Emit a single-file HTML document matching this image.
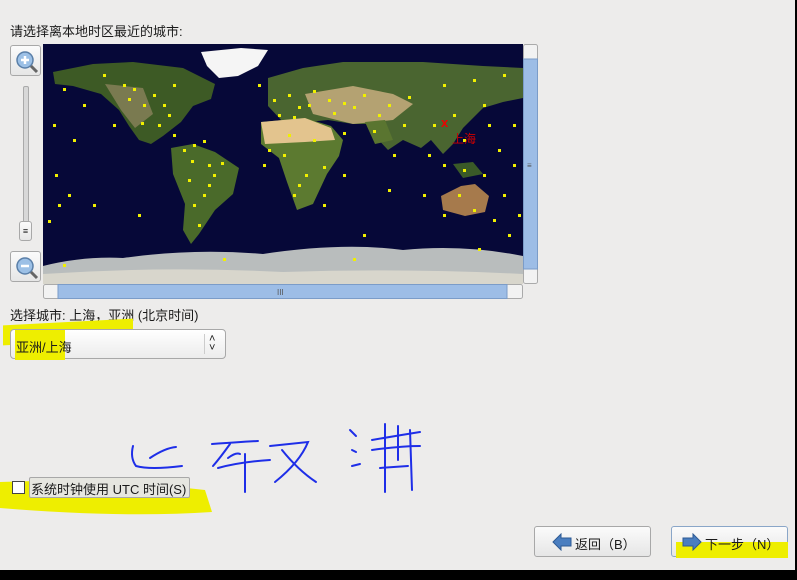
<!DOCTYPE html>
<html><head><meta charset="utf-8"><style>
body{margin:0;width:797px;height:580px;background:#edeceb;font-family:"Liberation Sans","Noto Sans CJK SC",sans-serif;font-size:13px;color:#1a1a1a;position:relative;overflow:hidden}
.a{position:absolute}
.btn{position:absolute;border:1px solid #a8a8a8;border-radius:3px;background:linear-gradient(#fbfbfb,#e6e6e6);box-sizing:border-box}
</style></head><body>
<div class="a" style="left:10px;top:21px">请选择离本地时区最近的城市:</div>
<div class="btn" style="left:10px;top:45px;width:31px;height:31px">
<svg width="31" height="31"><circle cx="14" cy="14" r="8" fill="#9cc0e6" stroke="#5a7fa8" stroke-width="1.5"/><path d="M10 14h8M14 10v8" stroke="#fff" stroke-width="2.5"/><path d="M20 20l6 6" stroke="#666" stroke-width="3"/></svg></div>
<div class="btn" style="left:10px;top:251px;width:31px;height:31px">
<svg width="31" height="31"><circle cx="14" cy="14" r="8" fill="#9cc0e6" stroke="#5a7fa8" stroke-width="1.5"/><path d="M10 14h8" stroke="#fff" stroke-width="2.5"/><path d="M20 20l6 6" stroke="#666" stroke-width="3"/></svg></div>
<div class="a" style="left:23px;top:86px;width:4px;height:150px;background:#d8d8d8;border:1px solid #aaa;border-radius:2px"></div>
<div class="btn" style="left:19px;top:221px;width:13px;height:20px;font-size:9px;text-align:center;line-height:18px">≡</div>
<svg class="a" style="left:43px;top:44px" width="496" height="256">
<rect x="0" y="0" width="480" height="240" fill="#060838"/>
<polygon points="10,28 50,20 90,18 140,24 172,40 168,55 150,62 138,78 120,92 108,100 96,96 86,82 76,66 58,50 30,42 12,40" fill="#3d5a25"/>
<polygon points="62,40 100,44 110,70 92,84 78,66" fill="#7a7a50"/>
<polygon points="158,8 198,4 225,6 215,22 195,32 176,34 164,22" fill="#f5f5f5"/>
<polygon points="128,104 150,100 172,108 196,124 190,150 172,166 156,190 148,200 140,186 142,160 130,130" fill="#4a6a2a"/>
<polygon points="225,34 260,24 300,18 380,18 440,22 480,24 480,54 460,58 440,64 420,84 410,100 400,110 388,96 378,104 360,96 345,106 332,92 330,80 310,80 285,76 265,78 240,78 225,62" fill="#4a6530"/>
<polygon points="262,50 310,42 350,50 370,60 350,76 310,80 270,70" fill="#b4a272"/>
<polygon points="322,78 342,76 350,96 332,100" fill="#5a7530"/>
<polygon points="218,78 262,74 288,82 300,96 296,112 284,130 270,160 254,166 244,138 236,114 218,100" fill="#5c7a30"/>
<polygon points="218,78 262,74 288,84 292,96 262,98 222,100" fill="#e3c48e"/>
<polygon points="398,152 418,142 432,140 446,152 442,168 422,172 400,166" fill="#a67a4c"/>
<polygon points="410,120 430,118 440,130 420,134" fill="#3a5a28"/>
<path d="M0 222 Q40 212 80 214 Q150 204 220 210 Q300 198 360 206 Q420 200 480 212 L480 240 L0 240Z" fill="#b9bdbd"/>
<path d="M0 230 Q120 222 240 228 Q360 224 480 230 L480 240 L0 240Z" fill="#d8d6cc"/>
<g fill="#f0f000">
<rect x="20" y="44" width="3" height="3"/><rect x="60" y="30" width="3" height="3"/><rect x="85" y="54" width="3" height="3"/><rect x="110" y="50" width="3" height="3"/><rect x="120" y="60" width="3" height="3"/><rect x="125" y="70" width="3" height="3"/><rect x="98" y="78" width="3" height="3"/><rect x="130" y="90" width="3" height="3"/><rect x="150" y="100" width="3" height="3"/><rect x="160" y="96" width="3" height="3"/><rect x="148" y="116" width="3" height="3"/><rect x="165" y="120" width="3" height="3"/><rect x="178" y="118" width="3" height="3"/><rect x="165" y="140" width="3" height="3"/><rect x="150" y="160" width="3" height="3"/><rect x="155" y="180" width="3" height="3"/><rect x="10" y="80" width="3" height="3"/><rect x="30" y="95" width="3" height="3"/><rect x="12" y="130" width="3" height="3"/><rect x="25" y="150" width="3" height="3"/><rect x="50" y="160" width="3" height="3"/><rect x="95" y="170" width="3" height="3"/><rect x="5" y="176" width="3" height="3"/><rect x="70" y="80" width="3" height="3"/><rect x="40" y="60" width="3" height="3"/>
<rect x="80" y="40" width="3" height="3"/><rect x="100" y="60" width="3" height="3"/><rect x="115" y="80" width="3" height="3"/><rect x="140" y="105" width="3" height="3"/><rect x="170" y="130" width="3" height="3"/><rect x="160" y="150" width="3" height="3"/><rect x="145" y="135" width="3" height="3"/><rect x="90" y="44" width="3" height="3"/><rect x="130" y="40" width="3" height="3"/><rect x="15" y="160" width="3" height="3"/>
<rect x="230" y="55" width="3" height="3"/><rect x="245" y="50" width="3" height="3"/><rect x="255" y="62" width="3" height="3"/><rect x="270" y="46" width="3" height="3"/><rect x="285" y="55" width="3" height="3"/><rect x="300" y="58" width="3" height="3"/><rect x="320" y="50" width="3" height="3"/><rect x="345" y="60" width="3" height="3"/><rect x="365" y="52" width="3" height="3"/><rect x="400" y="40" width="3" height="3"/><rect x="430" y="35" width="3" height="3"/><rect x="460" y="30" width="3" height="3"/><rect x="445" y="80" width="3" height="3"/><rect x="420" y="95" width="3" height="3"/><rect x="400" y="120" width="3" height="3"/><rect x="385" y="110" width="3" height="3"/><rect x="350" y="110" width="3" height="3"/><rect x="330" y="86" width="3" height="3"/><rect x="300" y="88" width="3" height="3"/><rect x="240" y="110" width="3" height="3"/><rect x="225" y="105" width="3" height="3"/><rect x="262" y="130" width="3" height="3"/><rect x="250" y="150" width="3" height="3"/><rect x="280" y="122" width="3" height="3"/><rect x="300" y="130" width="3" height="3"/><rect x="420" y="125" width="3" height="3"/><rect x="440" y="130" width="3" height="3"/><rect x="455" y="105" width="3" height="3"/><rect x="470" y="120" width="3" height="3"/><rect x="460" y="150" width="3" height="3"/><rect x="430" y="165" width="3" height="3"/><rect x="400" y="170" width="3" height="3"/><rect x="450" y="175" width="3" height="3"/><rect x="475" y="170" width="3" height="3"/><rect x="470" y="80" width="3" height="3"/><rect x="345" y="145" width="3" height="3"/><rect x="380" y="150" width="3" height="3"/><rect x="320" y="190" width="3" height="3"/><rect x="20" y="220" width="3" height="3"/><rect x="180" y="214" width="3" height="3"/><rect x="310" y="214" width="3" height="3"/><rect x="435" y="204" width="3" height="3"/>
<rect x="235" y="70" width="3" height="3"/><rect x="250" y="72" width="3" height="3"/><rect x="265" y="60" width="3" height="3"/><rect x="290" y="68" width="3" height="3"/><rect x="310" y="62" width="3" height="3"/><rect x="335" y="70" width="3" height="3"/><rect x="360" y="80" width="3" height="3"/><rect x="390" y="80" width="3" height="3"/><rect x="410" y="70" width="3" height="3"/><rect x="245" y="90" width="3" height="3"/><rect x="270" y="95" width="3" height="3"/><rect x="255" y="140" width="3" height="3"/><rect x="280" y="160" width="3" height="3"/><rect x="220" y="120" width="3" height="3"/><rect x="215" y="40" width="3" height="3"/><rect x="440" y="60" width="3" height="3"/><rect x="415" y="150" width="3" height="3"/><rect x="465" y="190" width="3" height="3"/>
</g>
<text x="398" y="83" fill="#e00" font-size="13" font-weight="bold" font-family="Liberation Sans">x</text>
<text x="409" y="99" fill="#c00" font-size="12" font-family="Liberation Sans,Noto Sans CJK SC,sans-serif">上海</text>
<rect x="480.5" y="0.5" width="14" height="239" rx="2" fill="#f2f2f2" stroke="#aaa"/>
<rect x="480.5" y="15" width="14" height="210" fill="#9dbde6" stroke="#7b9cc8"/>
<text x="484" y="124" font-size="8" fill="#555">≡</text>
<rect x="0.5" y="240.5" width="479" height="14" rx="2" fill="#f2f2f2" stroke="#aaa"/>
<rect x="15" y="240.5" width="449" height="14" fill="#9dbde6" stroke="#7b9cc8"/>
<text x="234" y="251" font-size="8" fill="#555">III</text>
</svg>
<div class="a" style="left:10px;top:305px">选择城市: 上海，亚洲 (北京时间)</div>
<div class="a" style="left:3px;top:322px;width:130px;height:20px;background:#eeee00;transform:skewY(-3deg)"></div>
<div class="btn" style="left:10px;top:329px;width:216px;height:30px;border-radius:4px;background:linear-gradient(#fff,#ececec)">
<div class="a" style="left:4px;top:0;width:50px;height:30px;background:#eeee00"></div>
<div class="a" style="left:5px;top:7px">亚洲/上海</div>
<div class="a" style="left:193px;top:4px;width:1px;height:20px;background:#ccc"></div>
<div class="a" style="left:198px;top:5px;font-size:11px;line-height:9px">˄<br>˅</div>
</div>
<svg class="a" style="left:0;top:400px" width="440" height="120">
<path d="M0 82 Q100 78 205 90 L212 112 Q120 118 0 108Z" fill="#eeee00"/>
<g stroke="#1e2ee8" stroke-width="2" fill="none" stroke-linecap="round">
<path d="M133 46 Q130 58 136 66 Q150 70 182 66"/>
<path d="M150 58 Q165 48 176 47"/>
<path d="M212 44 Q240 42 258 41"/>
<path d="M230 44 Q220 58 213 66"/>
<path d="M228 58 Q236 52 240 54"/>
<path d="M218 68 Q240 62 270 60"/>
<path d="M245 54 L245 92"/>
<path d="M270 46 L308 42 Q300 62 275 82"/>
<path d="M282 50 Q298 70 316 82"/>
<path d="M350 30 L356 36"/><path d="M352 50 L356 52"/><path d="M352 66 L360 64"/>
<path d="M372 40 Q395 36 420 32"/><path d="M385 24 L385 92"/><path d="M398 26 L398 60"/>
<path d="M372 50 Q400 46 420 46"/><path d="M410 30 L412 90"/><path d="M380 68 L408 66"/>
</g>
</svg>
<div class="a" style="left:12px;top:481px;width:11px;height:11px;border:1px solid #444;background:#fff"></div>
<div class="btn" style="left:29px;top:477px;width:161px;height:21px;border-radius:2px;background:#e6e6e0"></div>
<div class="a" style="left:31px;top:479px">系统时钟使用 UTC 时间(S)</div>
<div class="btn" style="left:534px;top:526px;width:117px;height:31px">
<svg class="a" style="left:17px;top:6px" width="20" height="18"><path d="M1 9 L9 1 V5 H19 V13 H9 V17Z" fill="#4a7ec0" stroke="#2d5a94"/></svg>
<div class="a" style="left:40px;top:7px">返回（B）</div></div>
<div class="btn" style="left:671px;top:526px;width:117px;height:31px;border-color:#8aa6c8">
<div class="a" style="left:4px;top:15px;width:112px;height:16px;background:#eeee00"></div>
<svg class="a" style="left:10px;top:6px" width="20" height="18"><path d="M19 9 L11 1 V5 H1 V13 H11 V17Z" fill="#4a7ec0" stroke="#2d5a94"/></svg>
<div class="a" style="left:33px;top:7px">下一步（N）</div></div>
<div class="a" style="left:0;top:570px;width:797px;height:10px;background:#000"></div>
<div class="a" style="left:795px;top:0;width:2px;height:580px;background:#000"></div>
</body></html>
